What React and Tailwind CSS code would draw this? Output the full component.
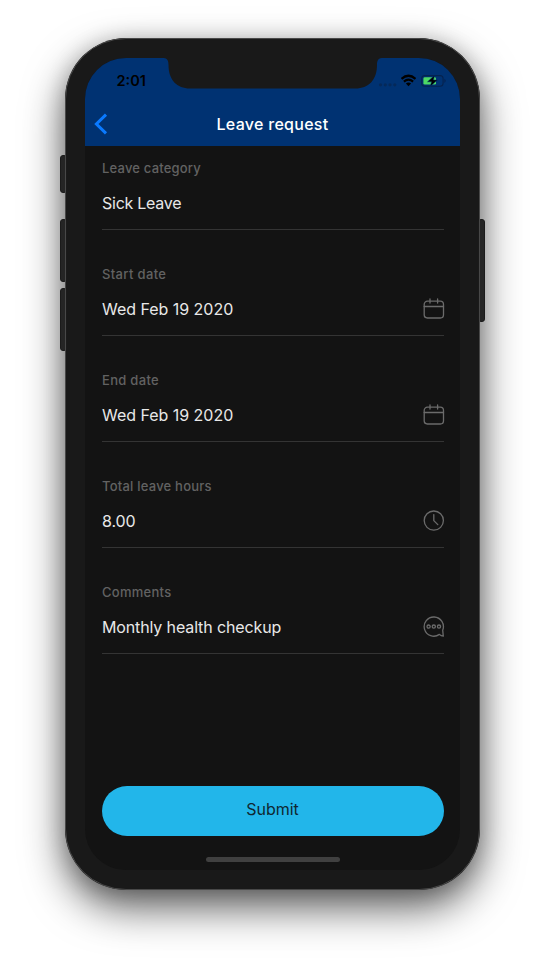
import React from "react";

const CalendarIcon = () => (
  <svg className="h-[22px] w-[22px]" viewBox="0 0 22 22" fill="none" stroke="#6b6b6b" strokeWidth="1.3" strokeLinecap="round">
    <rect x="1.2" y="3.2" width="19.3" height="16.8" rx="3.2" />
    <path d="M1.2 8.5H20.5M7 1V5M14.6 1V5" />
  </svg>
);

const ClockIcon = () => (
  <svg className="h-[22px] w-[22px]" viewBox="0 0 22 22" fill="none" stroke="#6b6b6b" strokeWidth="1.3" strokeLinecap="round" strokeLinejoin="round">
    <circle cx="10.8" cy="10.6" r="9.6" />
    <path d="M10.8 4.6V10.600L14.8 14.6" />
  </svg>
);

const CommentIcon = () => (
  <svg className="h-[22px] w-[22px]" viewBox="0 0 22 22" fill="none" stroke="#6b6b6b" strokeWidth="1.3" strokeLinecap="round" strokeLinejoin="round">
    <path d="M20.3 20.2L19.7 14.2A9.6 9.6 0 1 0 16.4 18.400Q18 20 20.3 20.2Z" />
    <circle cx="5.6" cy="10.6" r="1.6" />
    <circle cx="10.8" cy="10.6" r="1.6" />
    <circle cx="16" cy="10.6" r="1.6" />
  </svg>
);

const fields = [
  { label: "Leave category", value: "Sick Leave", track: "tracking-[-0.25px]", labelTrack: "tracking-[0.2px]" },
  { label: "Start date", value: "Wed Feb 19 2020", track: "tracking-[-0.03px]", labelTrack: "tracking-[0.35px]", Icon: CalendarIcon },
  { label: "End date", value: "Wed Feb 19 2020", track: "tracking-[-0.03px]", labelTrack: "tracking-[0.3px]", Icon: CalendarIcon },
  { label: "Total leave hours", value: "8.00", track: "tracking-[-0.1px]", labelTrack: "tracking-[0.22px]", Icon: ClockIcon },
  { label: "Comments", value: "Monthly health checkup", track: "tracking-[-0.13px]", labelTrack: "tracking-[0.27px]", Icon: CommentIcon },
];

function Field({ label, value, track, labelTrack, Icon }) {
  return (
    <div className="flex h-[106px] flex-col">
      <div className="flex h-[84px] flex-col border-b border-[#343434] pt-3">
        <span className={`h-5 self-start text-[13px] leading-5 font-medium text-[#626262] ${labelTrack}`}>{label}</span>
        <div className="mt-[13px] flex h-6 items-center justify-between">
          <span className={`text-[16px] leading-6 text-[#e8e8e8] ${track}`}>{value}</span>
          {Icon && <div className="-mr-px"><Icon /></div>}
        </div>
      </div>
    </div>
  );
}

const StatusIcons = () => (
  <svg className="h-4 w-[70px]" viewBox="0 0 70 16">
    <g fill="#052959">
      <circle cx="2.5" cy="11.8" r="1.6" />
      <circle cx="7.3" cy="11.8" r="1.6" />
      <circle cx="12" cy="11.8" r="1.6" />
      <circle cx="16.8" cy="11.8" r="1.6" />
    </g>
    <g fill="none" stroke="#000" strokeWidth="2.2">
      <path d="M23.500 5.8Q30.500 -.3 37.500 5.8" />
      <path d="M25.900 8.6Q30.500 4.7 35.100 8.6" />
    </g>
    <path d="M27.900 10.5Q30.500 8.5 33.100 10.5L30.500 13.2Z" fill="#000" />
    <rect x="43.7" y="2.6" width="21.4" height="10.6" rx="3" fill="none" stroke="#05234f" strokeWidth="1.1" />
    <path d="M66.4 5.8Q69 7.8 66.4 9.9Z" fill="#05234f" />
    <rect x="45.4" y="4.3" width="12.6" height="7.3" rx="1.4" fill="#4cd964" />
    <path d="M56.4 2.5L49.5 8.8H53.5L52.3 13.3L59.5 7H55.5Z" fill="#000" stroke="#003272" strokeWidth=".5" />
  </svg>
);

export default function App() {
  return (
    <div className="flex h-[964px] w-[545px] justify-center overflow-hidden bg-white pt-[38px] font-['Inter','Liberation_Sans',sans-serif]">
      <div className="relative h-[852px] w-[415px] rounded-[61px] bg-[#191919] pt-5 pl-5 shadow-[0_18px_42px_rgba(0,0,0,0.62),0_3px_22px_rgba(0,0,0,0.2)]">
        <span className="absolute top-[117px] -left-[5px] h-[38px] w-[7px] rounded-[3px] border border-[#1b1b1b] bg-[#252525]" />
        <span className="absolute top-[181px] -left-[5px] h-[63px] w-[7px] rounded-[3px] border border-[#1b1b1b] bg-[#252525]" />
        <span className="absolute top-[250px] -left-[5px] h-[63px] w-[7px] rounded-[3px] border border-[#1b1b1b] bg-[#252525]" />
        <span className="absolute top-[181px] -right-[5px] h-[103px] w-[7px] rounded-[3px] border border-[#1b1b1b] bg-[#252525]" />
        <div className="pointer-events-none absolute inset-0 rounded-[61px] border border-[#484848]" />
        <div className="relative flex h-[812px] w-[375px] flex-col overflow-hidden rounded-[41px] bg-[#131313]">
          <header className="flex h-[88px] shrink-0 flex-col bg-[#003272]">
            <div className="flex h-11 items-start justify-between pr-[12px] pl-[31.500px]">
              <span className="pt-[13px] text-[14.5px] leading-5 font-semibold text-black">2:01</span>
              <div className="pt-[15px]"><StatusIcons /></div>
            </div>
            <div className="grid h-11 grid-cols-[60px_1fr_60px] items-center">
              <svg className="ml-[9px] h-[22px] w-[14px]" viewBox="0 0 14 22" fill="none" stroke="#0a7aff" strokeWidth="3" strokeLinejoin="miter">
                <path d="M12 1.6L2.4 11L12 20.4" />
              </svg>
              <h1 className="text-center text-[16px] leading-6 font-medium tracking-[0.28px] text-white">Leave request</h1>
            </div>
          </header>
          <svg className="absolute top-0 left-[77px] h-[31px] w-[222px]" viewBox="0 0 222 31">
            <path d="M0 0C5 0 6.5 1.8 6.5 7C6.5 22 15 30.5 28 30.5H193.5C206.500 30.5 215 22 215 7C215 1.8 216.500 0 221.500 0Z" fill="#191919" />
          </svg>
          <main className="flex flex-1 flex-col pr-4 pl-[17px]">
            {fields.map((f) => (
              <Field key={f.label} {...f} />
            ))}
          </main>
          <footer className="flex h-[84px] shrink-0 flex-col items-center px-[16.500px]">
            <button className="h-[50px] w-full shrink-0 rounded-full bg-[#22b6ea] pb-1 text-[16px] leading-6 text-[#102831]">Submit</button>
            <span className="mt-[21px] h-[5px] w-[134px] shrink-0 rounded-full bg-[#404040]" />
          </footer>
        </div>
      </div>
    </div>
  );
}
